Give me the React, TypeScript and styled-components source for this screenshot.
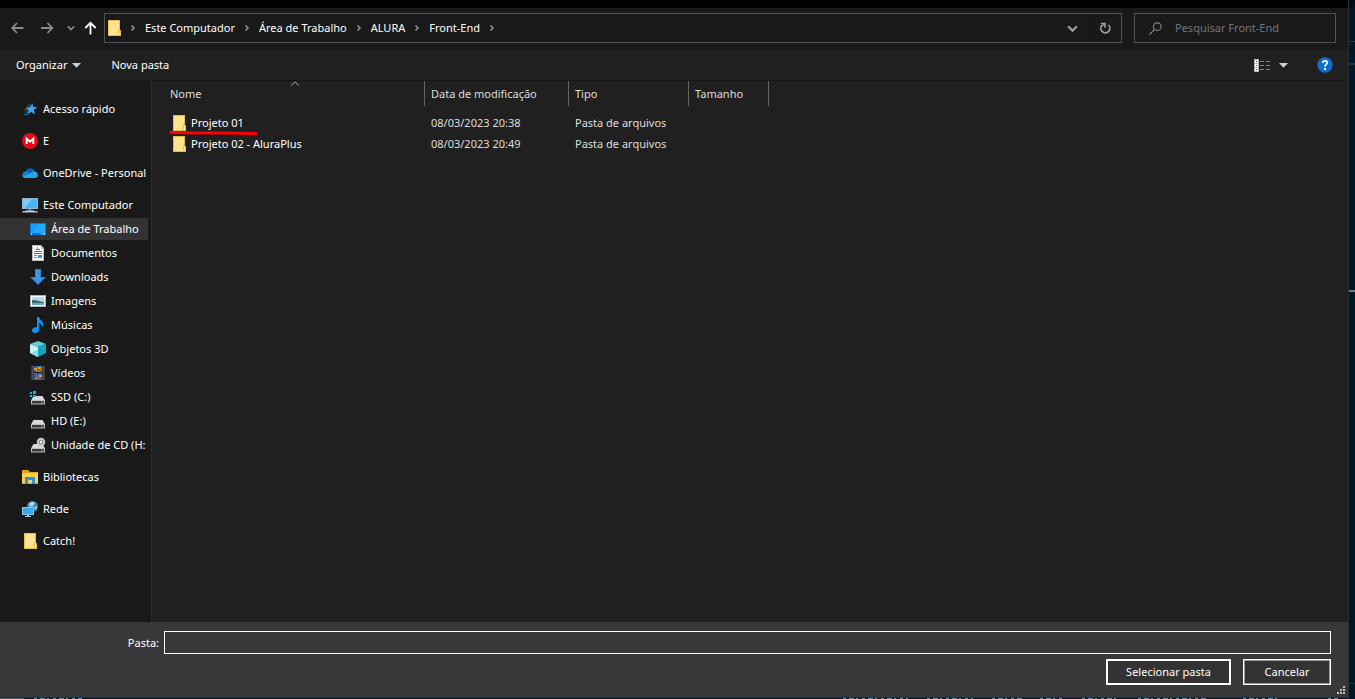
import React from "react";
import styled, { createGlobalStyle, css } from "styled-components";

const Global = createGlobalStyle`
  *, *::before, *::after { box-sizing: border-box; }
  body {
    margin: 0;
    background: #011627;
    color: #fff;
    font-family: "Noto Sans", "Open Sans", sans-serif;
    font-size: 11px;
    line-height: 16px;
  }
  button, input { font: inherit; color: inherit; }
  button { cursor: default; }
`;

const Desktop = styled.div`
  display: flex;
  min-height: 100vh;
`;

const EditorEdge = styled.div`
  width: 7px;
  flex: none;
  border-left: 1px solid #262e36;
  background:
    linear-gradient(#24394a, #24394a) 0 41px / 100% 1px no-repeat,
    linear-gradient(#1b3448, #1b3448) 0 63px / 100% 2px no-repeat,
    linear-gradient(#5f7e97, #5f7e97) 0 290px / 100% 2px no-repeat,
    linear-gradient(#22303c, #22303c) 0 683px / 100% 1px no-repeat,
    linear-gradient(#010e1a, #010e1a) 0 0 / 100% 7px no-repeat,
    #011627;
`;

const Main = styled.div`
  flex: 1;
  min-width: 0;
  display: flex;
  flex-direction: column;
`;

const TitleStrip = styled.div`
  height: 8px;
  background: #000;
`;

const AddressRow = styled.header`
  display: flex;
  align-items: center;
  height: 42px;
  padding: 5px 12px 7px 7px;
  background: #191919;
`;

const IconButton = styled.button<{ $w: number }>`
  width: ${(p) => p.$w}px;
  height: 28px;
  padding: 0;
  border: 0;
  background: none;
  display: flex;
  align-items: center;
  justify-content: center;
  flex: none;
  svg { flex: none; }
`;

const NavButtons = styled.nav`
  display: flex;
  align-items: center;
  flex: none;
`;

const AddressBox = styled.div`
  flex: 1;
  min-width: 0;
  height: 30px;
  display: flex;
  align-items: center;
  border: 1px solid #535353;
  padding-left: 2px;
`;

const Crumbs = styled.ol`
  flex: 1;
  min-width: 0;
  display: flex;
  align-items: center;
  list-style: none;
  margin: 0;
  padding: 0;
`;

const Crumb = styled.li`
  display: flex;
  align-items: center;
  white-space: nowrap;
`;

const CrumbLink = styled.a`
  color: #fff;
  text-decoration: none;
`;

const Separator = styled.svg`
  width: 24px;
  height: 8px;
  flex: none;
`;

const RefreshCell = styled.div`
  border-left: 1px solid #141414;
`;

const SearchBox = styled.label`
  width: 202px;
  height: 30px;
  margin-left: 12px;
  padding-left: 14px;
  display: flex;
  align-items: center;
  gap: 13px;
  border: 1px solid #535353;
`;

const SearchInput = styled.input`
  flex: 1;
  min-width: 0;
  padding: 0;
  border: 0;
  outline: 0;
  background: none;
  &::placeholder { color: #757575; opacity: 1; }
`;

const Toolbar = styled.div`
  display: flex;
  align-items: center;
  height: 31px;
  padding: 0 15px 0 16px;
  background: #202020;
  border-bottom: 1px solid #161616;
`;

const ToolButton = styled.button`
  display: flex;
  align-items: center;
  gap: 5px;
  padding: 0;
  border: 0;
  background: none;
  white-space: nowrap;
  margin-right: 30px;
`;

const ToolEnd = styled.div`
  display: flex;
  align-items: center;
  margin-left: auto;
  gap: 29px;
`;

const ViewButton = styled.button`
  display: flex;
  align-items: center;
  gap: 9px;
  padding: 0;
  border: 0;
  background: none;
`;

const HelpButton = styled.button`
  display: flex;
  padding: 0;
  border: 0;
  background: none;
`;

const Body = styled.div`
  flex: 1;
  display: flex;
`;

const Sidebar = styled.nav`
  width: 152px;
  flex: none;
  padding: 17px 3px 0 0;
  background: #191919;
  border-right: 1px solid #2b2b2b;
  display: flex;
  flex-direction: column;
  gap: 10px;
`;

const Group = styled.ul`
  list-style: none;
  margin: 0;
  padding: 0;
  display: flex;
  flex-direction: column;
  gap: 2px;
`;

const Place = styled.a<{ $nested?: boolean; $active?: boolean }>`
  display: flex;
  align-items: center;
  gap: 5px;
  height: 22px;
  padding-left: ${(p) => (p.$nested ? 30 : 22)}px;
  color: #fff;
  text-decoration: none;
  white-space: nowrap;
  overflow: hidden;
  ${(p) => p.$active && css`background: #333;`}
  svg { flex: none; }
`;

const Files = styled.main`
  flex: 1;
  min-width: 0;
  background: #202020;
`;

const FileTable = styled.table`
  table-layout: fixed;
  width: 617px;
  border-collapse: collapse;
  color: #dedede;
`;

const HeadCell = styled.th<{ $w: number }>`
  width: ${(p) => p.$w}px;
  padding: 0 0 6px;
  font-weight: 400;
  text-align: left;
`;

const HeadLabel = styled.div<{ $first?: boolean }>`
  position: relative;
  height: 25px;
  line-height: 25px;
  margin-left: ${(p) => (p.$first ? 13 : 0)}px;
  padding-left: ${(p) => (p.$first ? 5 : 6)}px;
  border-right: 1px solid #636363;
`;

const SortMark = styled.svg`
  position: absolute;
  top: 0;
  left: 50%;
  margin-left: -5px;
`;

const Cell = styled.td`
  height: 21px;
  padding: 0 0 0 6px;
  white-space: nowrap;
`;

const NameCell = styled(Cell)`
  position: relative;
  padding-left: 20px;
  color: #fff;
`;

const FileName = styled.div`
  display: flex;
  align-items: center;
  gap: 5px;
`;

const RedMark = styled.svg`
  position: absolute;
  left: 17px;
  top: 18px;
  z-index: 1;
`;

const Footer = styled.form`
  position: relative;
  background: #383838;
  padding: 9px 17px 12px 0;
`;

const FieldRow = styled.div`
  display: flex;
  align-items: center;
`;

const FieldLabel = styled.label`
  width: 164px;
  padding-right: 5px;
  text-align: right;
`;

const FolderInput = styled.input`
  flex: 1;
  min-width: 0;
  height: 23px;
  padding: 0 4px;
  background: #383838;
  border: 1px solid #fff;
  outline: 0;
`;

const Actions = styled.div`
  display: flex;
  justify-content: flex-end;
  gap: 12px;
  margin-top: 5px;
`;

const ActionButton = styled.button<{ $primary?: boolean }>`
  width: ${(p) => (p.$primary ? 125 : 88)}px;
  height: 26px;
  padding: 0;
  background: #333;
  border: ${(p) => (p.$primary ? "2px solid #fff" : "1px solid #fff")};
  box-shadow: ${(p) => (p.$primary ? "none" : "inset 0 0 0 1px #9b9b9b")};
  white-space: nowrap;
`;

const Grip = styled.svg`
  position: absolute;
  right: 2px;
  bottom: 2px;
`;

const BottomStrip = styled.div`
  height: 2px;
  overflow: hidden;
  border-top: 1px solid #262e36;
  background: #011627;
  display: flex;
`;

/* ---- icons ---- */

const FolderIcon = ({ w = 14 }: { w?: number }) => (
  <svg width={w} height="16" viewBox={w === 16 ? "-1 0 16 16" : "0 0 14 16"} aria-hidden="true">
    <path d="M1 0h12v10l1 1v5H1z" fill="#e3bf4e" />
    <path d="M2 1h10v14H2z" fill="#ffe38e" />
    <path d="M11 10h3v6h-3z" fill="#e3bf4e" />
    <path d="M12.500 11v4" stroke="#ffe9a4" />
  </svg>
);

const Arrow = ({ dir }: { dir: "left" | "right" | "up" }) => (
  <svg width="14" height="14" viewBox="0 0 14 14" fill="none" aria-hidden="true"
    stroke={dir === "up" ? "#fff" : "#8b8b8b"} strokeWidth="1.8">
    {dir === "left" && <path d="M12.500 7H1.500M6 2 1.200 7 6 12" />}
    {dir === "right" && <path d="M1 7h11M7.500 2l4.800 5-4.800 5" />}
    {dir === "up" && <path d="M7.500 13.500V2.500M2.300 7 7.500 1.800 12.700 7" />}
  </svg>
);

const Chevron = ({ size = 8, color = "#8b8b8b" }: { size?: number; color?: string }) => (
  <svg width={size} height={size} viewBox="0 0 10 10" fill="none" aria-hidden="true">
    <path d="M1 3l4 4 4-4" stroke={color} strokeWidth="2" />
  </svg>
);

const CrumbArrow = () => (
  <Separator viewBox="0 0 24 8" aria-hidden="true">
    <path d="M10.500 1.500 13 4l-2.500 2.500" fill="none" stroke="#909090" strokeWidth="1.600" />
  </Separator>
);

const Caret = () => (
  <svg width="9" height="5" viewBox="0 0 9 5" aria-hidden="true">
    <path d="M0 0h9L4.500 4.700z" fill="#d0d0d0" />
  </svg>
);

const RefreshIcon = () => (
  <svg width="14" height="14" viewBox="0 0 14 14" fill="none" aria-hidden="true">
    <path d="M10.400 4A4.500 4.500 0 1 1 4 4.300" stroke="#a0a0a0" strokeWidth="1.700" />
    <path d="M2.800 2.500H7v4.200" stroke="#a0a0a0" strokeWidth="1.600" />
    <path d="M6.800 2.700 4 5" stroke="#a0a0a0" strokeWidth="1.200" />
  </svg>
);

const SearchIcon = () => (
  <svg width="13" height="13" viewBox="0 0 13 13" fill="none" aria-hidden="true">
    <circle cx="8.300" cy="4.700" r="3.800" stroke="#858585" strokeWidth="1.100" />
    <path d="M5.500 7.500.5 12.500" stroke="#858585" strokeWidth="1.200" />
  </svg>
);

const ViewIcon = () => (
  <svg width="16" height="13" viewBox="0 0 16 13" aria-hidden="true">
    <path d="M0 0h5v13H0z" fill="#b4b4b4" />
    <path d="M1 1h3v3H1zM1 5h3v3H1zM1 9h3v3H1z" fill="#fff" />
    <path d="M2 2h1v1H2z" fill="#555" />
    <path d="M2 6h1v1H2z" fill="#2584d8" />
    <path d="M2 10h1v1H2z" fill="#b3261e" />
    <path d="M6 2h4v1H6zM12 2h4v1h-4zM6 6h4v1H6zM12 6h4v1h-4zM6 10h4v1H6zM12 10h4v1h-4z" fill="#858585" />
  </svg>
);

const HelpIcon = () => (
  <svg width="16" height="16" viewBox="0 0 16 16" aria-hidden="true">
    <circle cx="8" cy="8" r="7.700" fill="#0b6fd0" />
    <path d="M5.800 5.900C5.800 3 10.300 3.200 10.200 5.800 10.100 7.500 8 7.500 8 9.700" fill="none" stroke="#fff" strokeWidth="1.800" />
    <path d="M7 11h2v2H7z" fill="#fff" />
  </svg>
);

const Icon = ({ children }: { children: React.ReactNode }) => (
  <svg width="16" height="16" viewBox="0 0 16 16" aria-hidden="true">{children}</svg>
);

const Drive = () => (
  <>
    <path d="M3.500 6h9L15 10.500H1z" fill="#d9d9d9" />
    <path d="M1 10h14v4.500H1z" fill="#bdbdbd" />
    <path d="M2 11h12v2.500H2z" fill="#3a3a3a" />
    <path d="M11 11.500h1.500V13H11z" fill="#35d04f" />
  </>
);

const icons: Record<string, React.ReactNode> = {
  star: (
    <Icon>
      <path d="M10.500 2 11 6l4.500.3-3.700 2.500 1 4.700-3.600-2.700-3.700 3 1-4.600L4 6.500l4-.4z" fill="#35a8ef" />
      <path d="M6 4h2.500M4 6h2M2.500 8.500h3.500M3 11h3M2 13.500h3.500" stroke="#1a6ca5" strokeWidth="1" />
    </Icon>
  ),
  mega: (
    <Icon>
      <circle cx="8" cy="8" r="8" fill="#e30b17" />
      <path d="M4.700 11V5.600L8 8.700l3.300-3.100V11" fill="none" stroke="#fff" strokeWidth="1.900" />
    </Icon>
  ),
  cloud: (
    <Icon>
      <path d="M3 8C4 2.500 11 1.500 13 6.500L8 11z" fill="#0a5fb4" />
      <path d="M.3 10.500C0 7.500 3 5.800 5.500 7L10 11l-7 2C1.500 13 .4 12 .3 10.500z" fill="#1180d8" />
      <path d="M9 8c3-3 7-1 6.900 2.300C15.900 12 14.800 13 13.300 13H3c-1 0-1.800-.5-2.200-1.200z" fill="#29a3ea" />
    </Icon>
  ),
  computer: (
    <Icon>
      <path d="M0 1h16v11H0z" fill="#8bb9d6" />
      <path d="M1 2h14v9H1z" fill="#48b4f4" />
      <path d="M1 2h9L3 11H1z" fill="#7bcbfb" />
      <path d="M7 12h2v1H7z" fill="#7d8a94" />
      <path d="M4 13h8v1H4z" fill="#8d9aa4" />
      <path d="M1 14h14l1 1.500H0z" fill="#b7c6d1" />
    </Icon>
  ),
  desktop: (
    <Icon>
      <path d="M0 2h16v12H0z" fill="#0a78d0" />
      <path d="M1 3h14v9H1z" fill="#15a0ff" />
      <path d="M8 3h7v9H3z" fill="#25a8ff" />
      <path d="M1 12.500h1v1H1zM11 12.500h1v1h-1zM13 12.500h2v1h-2z" fill="#fff" />
    </Icon>
  ),
  document: (
    <Icon>
      <path d="M2 0h9l3 3v13H2z" fill="#bdbdbd" />
      <path d="M3 1h8v3h2v11H3z" fill="#fff" />
      <path d="M4 6.500h8M4 8.500h8M6 4.500h4M6.500 3h2" stroke="#2789cf" strokeWidth="1" />
      <path d="M4 10.500h3M4 12.500h3" stroke="#888" strokeWidth="1" />
      <path d="M8 10h4v3H8z" fill="#2b98d4" />
    </Icon>
  ),
  download: (
    <Icon>
      <path d="M5 0h6v8h5l-8 8-8-8h5z" fill="#2883d8" />
      <path d="M6 1h4v8h3.500L8 14.500 2.500 9H6z" fill="#3b94e6" />
    </Icon>
  ),
  image: (
    <Icon>
      <path d="M0 2h16v12H0z" fill="#aeb3b7" />
      <path d="M1 3h14v10H1z" fill="#fff" />
      <path d="M2 4h12v8H2z" fill="#b5daf0" />
      <path d="M2 7c4-.5 7 1 12 2v1H2z" fill="#3d6f68" />
      <path d="M2 10h12v2H2z" fill="#6fa6c8" />
    </Icon>
  ),
  music: (
    <Icon>
      <path d="M7 0h2c.5 3 4.500 4 4 8-.2 1-.5 2-1.200 2.600C12.300 8 11 6.500 9 6v6.500C9 14.500 7 16 5 16s-3-1.300-3-2.800c0-2 2.500-3.400 5-2.900z" fill="#0c98f5" />
    </Icon>
  ),
  cube: (
    <Icon>
      <path d="M0 3 8 0l8 3-8 3z" fill="#5fcbdc" />
      <path d="M0 3l8 3v10l-8-4z" fill="#c7f3f7" />
      <path d="M8 6l8-3v9l-8 4z" fill="#12a6bf" />
      <path d="M0 12l8-3v7z" fill="#8be0ea" />
    </Icon>
  ),
  video: (
    <Icon>
      <path d="M1 1h14v14H1z" fill="#3b3b3b" />
      <path d="M4 1h8v14H4z" fill="#3d62a8" />
      <path d="M4 3h3v2H4zM8 2h3v2H8zM9 10h3v2H9z" fill="#d9a525" />
      <path d="M6 5h5v2H6zM5 12h4v2H5z" fill="#b96a2c" />
      <path d="M4 7.500h8" stroke="#1a1a1a" />
      <path d="M2.500 1.500v14M13.500 1.500v14" stroke="#777" strokeDasharray="1 2" />
    </Icon>
  ),
  ssd: (
    <Icon>
      <g transform="translate(0 1)"><Drive /></g>
      <path d="M0 3h2v2H0zM3 2h3v3H3zM0 6h2v2H0zM3 6h3v2H3z" fill="#14b4ec" />
    </Icon>
  ),
  hdd: <Icon><g transform="translate(0 1)"><Drive /></g></Icon>,
  cd: (
    <Icon>
      <g transform="translate(0 1)"><Drive /></g>
      <circle cx="11" cy="5" r="3.200" fill="#777" stroke="#c4c4c4" strokeWidth="2.200" />
      <circle cx="11" cy="5" r="1.200" fill="#f3f3f3" />
    </Icon>
  ),
  library: (
    <Icon>
      <path d="M0 1h6l2 2h8v12H0z" fill="#e5a31a" />
      <path d="M0 4h16v10H0z" fill="#ffce55" />
      <path d="M3 8h10v7h-3v-4H6v4H3z" fill="#2e8fdc" />
    </Icon>
  ),
  network: (
    <Icon>
      <circle cx="10.500" cy="5.500" r="5.500" fill="#3c86ad" />
      <path d="M7 3c2-3 5-2 6-1l-2 3-3 1zM12 6l3-1-1 4z" fill="#a7d6e4" />
      <path d="M0 6h12v8H0z" fill="#8ec4e4" />
      <path d="M1 7h10v6H1z" fill="#35aaf4" />
      <path d="M5 14h2v1h2v1H3v-1h2z" fill="#b7c6d1" />
    </Icon>
  ),
  folder: <FolderIcon w={16} />,
};

type PlaceData = { icon: string; label: string; nested?: boolean; active?: boolean };

const places: PlaceData[][] = [
  [{ icon: "star", label: "Acesso rápido" }],
  [{ icon: "mega", label: "E" }],
  [{ icon: "cloud", label: "OneDrive - Personal" }],
  [
    { icon: "computer", label: "Este Computador" },
    { icon: "desktop", label: "Área de Trabalho", nested: true, active: true },
    { icon: "document", label: "Documentos", nested: true },
    { icon: "download", label: "Downloads", nested: true },
    { icon: "image", label: "Imagens", nested: true },
    { icon: "music", label: "Músicas", nested: true },
    { icon: "cube", label: "Objetos 3D", nested: true },
    { icon: "video", label: "Vídeos", nested: true },
    { icon: "ssd", label: "SSD (C:)", nested: true },
    { icon: "hdd", label: "HD (E:)", nested: true },
    { icon: "cd", label: "Unidade de CD (H:", nested: true },
  ],
  [{ icon: "library", label: "Bibliotecas" }],
  [{ icon: "network", label: "Rede" }],
  [{ icon: "folder", label: "Catch!" }],
];

const crumbs = ["Este Computador", "Área de Trabalho", "ALURA", "Front-End"];

const files = [
  { name: "Projeto 01", date: "08/03/2023 20:38", marked: true },
  { name: "Projeto 02 - AluraPlus", date: "08/03/2023 20:49", marked: false },
];

export default function App() {
  return (
    <>
      <Global />
      <Desktop>
        <Main>
          <TitleStrip />
          <AddressRow>
            <NavButtons aria-label="Navegação">
              <IconButton $w={21} aria-label="Voltar"><Arrow dir="left" /></IconButton>
              <IconButton $w={38} aria-label="Avançar"><Arrow dir="right" /></IconButton>
              <IconButton $w={10} aria-label="Locais recentes"><Chevron /></IconButton>
              <IconButton $w={28} aria-label="Acima"><Arrow dir="up" /></IconButton>
            </NavButtons>
            <AddressBox>
              <FolderIcon />
              <Crumbs>
                <Crumb><CrumbArrow /></Crumb>
                {crumbs.map((c) => (
                  <Crumb key={c}>
                    <CrumbLink href="#">{c}</CrumbLink>
                    <CrumbArrow />
                  </Crumb>
                ))}
              </Crumbs>
              <IconButton $w={32} aria-label="Locais anteriores"><Chevron size={11} color="#a0a0a0" /></IconButton>
              <RefreshCell>
                <IconButton $w={32} aria-label="Atualizar"><RefreshIcon /></IconButton>
              </RefreshCell>
            </AddressBox>
            <SearchBox>
              <SearchIcon />
              <SearchInput type="text" placeholder="Pesquisar Front-End" aria-label="Pesquisar Front-End" />
            </SearchBox>
          </AddressRow>
          <Toolbar>
            <ToolButton>Organizar<Caret /></ToolButton>
            <ToolButton>Nova pasta</ToolButton>
            <ToolEnd>
              <ViewButton aria-label="Modo de exibição"><ViewIcon /><Caret /></ViewButton>
              <HelpButton aria-label="Ajuda"><HelpIcon /></HelpButton>
            </ToolEnd>
          </Toolbar>
          <Body>
            <Sidebar aria-label="Locais">
              {places.map((group) => (
                <Group key={group[0].label}>
                  {group.map((p) => (
                    <li key={p.label}>
                      <Place href="#" $nested={p.nested} $active={p.active}>
                        {icons[p.icon]}
                        {p.label}
                      </Place>
                    </li>
                  ))}
                </Group>
              ))}
            </Sidebar>
            <Files>
              <FileTable>
                <thead>
                  <tr>
                    <HeadCell $w={273}>
                      <HeadLabel $first>
                        Nome
                        <SortMark width="10" height="5" viewBox="0 0 10 5" aria-hidden="true">
                          <path d="M1 4.500 5 1l4 3.500" fill="none" stroke="#a8a8a8" />
                        </SortMark>
                      </HeadLabel>
                    </HeadCell>
                    <HeadCell $w={144}><HeadLabel>Data de modificação</HeadLabel></HeadCell>
                    <HeadCell $w={120}><HeadLabel>Tipo</HeadLabel></HeadCell>
                    <HeadCell $w={80}><HeadLabel>Tamanho</HeadLabel></HeadCell>
                  </tr>
                </thead>
                <tbody>
                  {files.map((f) => (
                    <tr key={f.name}>
                      <NameCell>
                        <FileName><FolderIcon />{f.name}</FileName>
                        {f.marked && (
                          <RedMark width="90" height="6" viewBox="0 0 90 6" aria-hidden="true">
                            <path d="M2 2.200c25 1.200 55 .6 85 1.400" fill="none" stroke="#fb0007" strokeWidth="3" strokeLinecap="round" />
                          </RedMark>
                        )}
                      </NameCell>
                      <Cell>{f.date}</Cell>
                      <Cell>Pasta de arquivos</Cell>
                      <Cell />
                    </tr>
                  ))}
                </tbody>
              </FileTable>
            </Files>
          </Body>
          <Footer onSubmit={(e) => e.preventDefault()}>
            <FieldRow>
              <FieldLabel htmlFor="folder">Pasta:</FieldLabel>
              <FolderInput id="folder" type="text" />
            </FieldRow>
            <Actions>
              <ActionButton type="submit" $primary>Selecionar pasta</ActionButton>
              <ActionButton type="button">Cancelar</ActionButton>
            </Actions>
            <Grip width="9" height="9" viewBox="0 0 9 9" aria-hidden="true">
              <path d="M6 0h2v2H6zM3 3h2v2H3zM6 3h2v2H6zM0 6h2v2H0zM3 6h2v2H3zM6 6h2v2H6z" fill="#bfbfbf" />
            </Grip>
          </Footer>
          <BottomStrip>
            <svg width="100%" height="1" aria-hidden="true">
              <path d="M0 .5h24" stroke="#4b5a68" />
              <path d="M34 .5h48M843 .5h65M927 .5h46M992 .5h30M1040 .5h22M1082 .5h36M1138 .5h70M1243 .5h36M1328 .5h10" stroke="#5f8db0" strokeDasharray="3 3 5 2 2 4" />
            </svg>
          </BottomStrip>
        </Main>
        <EditorEdge />
      </Desktop>
    </>
  );
}
